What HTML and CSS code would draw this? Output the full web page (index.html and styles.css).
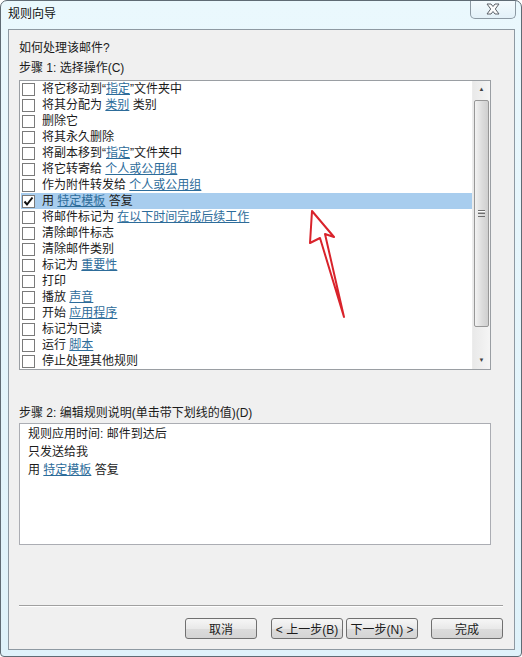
FILE: index.html
```html
<!DOCTYPE html>
<html lang="zh-CN">
<head>
  <meta charset="UTF-8">
  <title>规则向导</title>
  <link rel="stylesheet" href="styles.css">
</head>
<body>
  <div class="window">
    <div class="titlebar">
      <span class="title">规则向导</span>
      <button class="close-button">
        <svg width="20" height="12" viewBox="0 0 20 12">
          <path d="M4 1 L8 1 L10 3.5 L12 1 L16 1 L12.3 6 L16 11 L12 11 L10 8.5 L8 11 L4 11 L7.7 6 Z" fill="#fbfbfb" stroke="#5b6168" stroke-width="1"/>
        </svg>
      </button>
    </div>

    <div class="client">
      <div class="label">如何处理该邮件?</div>
      <div class="label">步骤 1: 选择操作(C)</div>

      <div class="listbox">
        <div class="items">
          <div class="row"><span class="box"></span>将它移动到“<a>指定</a>”文件夹中</div>
          <div class="row"><span class="box"></span>将其分配为 <a>类别</a> 类别</div>
          <div class="row"><span class="box"></span>删除它</div>
          <div class="row"><span class="box"></span>将其永久删除</div>
          <div class="row"><span class="box"></span>将副本移到“<a>指定</a>”文件夹中</div>
          <div class="row"><span class="box"></span>将它转寄给 <a>个人或公用组</a></div>
          <div class="row"><span class="box"></span>作为附件转发给 <a>个人或公用组</a></div>
          <div class="row selected"><span class="box"><svg width="11" height="11" viewBox="0 0 11 11"><path d="M1.5 5.5 L4 8.5 L9.5 1.5" fill="none" stroke="#111" stroke-width="2"/></svg></span>用 <a>特定模板</a> 答复</div>
          <div class="row"><span class="box"></span>将邮件标记为 <a>在以下时间完成后续工作</a></div>
          <div class="row"><span class="box"></span>清除邮件标志</div>
          <div class="row"><span class="box"></span>清除邮件类别</div>
          <div class="row"><span class="box"></span>标记为 <a>重要性</a></div>
          <div class="row"><span class="box"></span>打印</div>
          <div class="row"><span class="box"></span>播放 <a>声音</a></div>
          <div class="row"><span class="box"></span>开始 <a>应用程序</a></div>
          <div class="row"><span class="box"></span>标记为已读</div>
          <div class="row"><span class="box"></span>运行 <a>脚本</a></div>
          <div class="row"><span class="box"></span>停止处理其他规则</div>
        </div>
        <div class="scrollbar">
          <div class="arrow">&#9650;</div>
          <div class="thumb"><span class="grip"></span></div>
          <div class="track"></div>
          <div class="arrow">&#9660;</div>
        </div>
      </div>

      <div class="label step2">步骤 2: 编辑规则说明(单击带下划线的值)(D)</div>
      <div class="description">
        <div>规则应用时间: 邮件到达后</div>
        <div>只发送给我</div>
        <div>用 <a>特定模板</a> 答复</div>
      </div>

      <div class="separator"></div>

      <div class="buttons">
        <button class="btn">取消</button>
        <button class="btn wide">&lt; 上一步(B)</button>
        <button class="btn">下一步(N) &gt;</button>
        <button class="btn finish">完成</button>
      </div>
    </div>

    <svg class="annotation" width="60" height="120" viewBox="0 0 60 120">
      <path d="M10 2 L32 28 L23 25 L42 108 L18 29 L8 34 Z" fill="#fff" stroke="#d9232b" stroke-width="2" stroke-linejoin="round"/>
    </svg>
  </div>
</body>
</html>
```

FILE: styles.css
```css
body {
  margin: 0;
  padding: 0;
  background-color: #ffffff;
  font-family: "Liberation Sans", "Noto Sans CJK SC", sans-serif;
  font-size: 12px;
  color: #1b1b1b;
}

.window {
  position: relative;
  width: 520px;
  height: 655px;
  border: 1px solid #5f6b74;
  border-radius: 7px 7px 4px 4px;
  background: linear-gradient(#eaf8fd, #dff2fa);
  display: flex;
  flex-direction: column;
  overflow: hidden;
}

.titlebar {
  height: 28px;
  display: flex;
  justify-content: space-between;
  align-items: flex-start;
  padding-left: 7px;
}

.title {
  line-height: 27px;
  color: #111;
}

.close-button {
  width: 46px;
  height: 19px;
  margin-top: -1px;
  margin-right: 5px;
  border: 1px solid #8c99a3;
  border-top: none;
  border-radius: 0 0 5px 5px;
  background: linear-gradient(#f4fbfe, #e3f1f8);
  display: flex;
  justify-content: center;
  align-items: center;
  padding: 0;
}

.client {
  flex: 1;
  margin: 0 6px 6px 7px;
  border: 1px solid #8e99a2;
  background-color: #f0f0f0;
  padding: 8px 0 0 10px;
}

.label {
  line-height: 20px;
}

.listbox {
  margin-top: 2px;
  width: 470px;
  height: 288px;
  border: 1px solid #9a9ea3;
  background-color: #fff;
  display: flex;
}

.items {
  flex: 1;
  padding: 0 0 0 1px;
}

.row {
  height: 16px;
  line-height: 16px;
  display: flex;
  align-items: center;
  white-space: pre;
}

.row.selected {
  background-color: #a8cdee;
}

.box {
  width: 11px;
  height: 11px;
  border: 1px solid #7a7a7a;
  background-color: #fff;
  margin: 0 7px 0 1px;
  display: flex;
  justify-content: center;
  align-items: center;
}

.row a, .description a {
  color: #2d6c9a;
  text-decoration: underline;
}

.scrollbar {
  width: 17px;
  display: flex;
  flex-direction: column;
  background: linear-gradient(90deg, #e9e9e9, #f5f5f5);
  border-left: 1px solid #ececec;
}

.arrow {
  height: 17px;
  font-size: 6px;
  line-height: 17px;
  text-align: center;
  color: #404040;
}

.thumb {
  height: 225px;
  margin: 2px 1px 0 1px;
  border: 1px solid #979797;
  border-radius: 2px;
  background: linear-gradient(90deg, #f2f2f2, #dcdcdc 55%, #cfcfcf);
  display: flex;
  justify-content: center;
  align-items: center;
}

.grip {
  width: 7px;
  height: 5px;
  border-top: 1px solid #6e6e6e;
  border-bottom: 1px solid #6e6e6e;
  background: linear-gradient(#fff 0, #fff 1px, #6e6e6e 2px, #6e6e6e 3px, transparent 3px);
}

.track {
  flex: 1;
}

.step2 {
  margin-top: 33px;
}

.description {
  width: 462px;
  height: 111px;
  border: 1px solid #abadb3;
  background-color: #fff;
  padding: 1px 0 8px 8px;
  line-height: 18px;
}

.separator {
  width: 484px;
  margin-top: 60px;
  border-top: 1px solid #a0a0a0;
  border-bottom: 1px solid #ffffff;
}

.buttons {
  display: flex;
  justify-content: flex-end;
  width: 484px;
  margin-top: 11px;
  gap: 3px;
}

.btn {
  width: 72px;
  height: 21px;
  padding: 0;
  border: 1px solid #707070;
  border-radius: 3px;
  background: linear-gradient(#f6f6f6, #e9e9e9 50%, #dcdcdc 51%, #d4d4d4);
  font-family: "Liberation Sans", "Noto Sans CJK SC", sans-serif;
  font-size: 12px;
  color: #1b1b1b;
}

.btn.wide {
  margin-left: 11px;
}

.btn.finish {
  margin-left: 10px;
}

.annotation {
  position: absolute;
  left: 301px;
  top: 208px;
}
```
